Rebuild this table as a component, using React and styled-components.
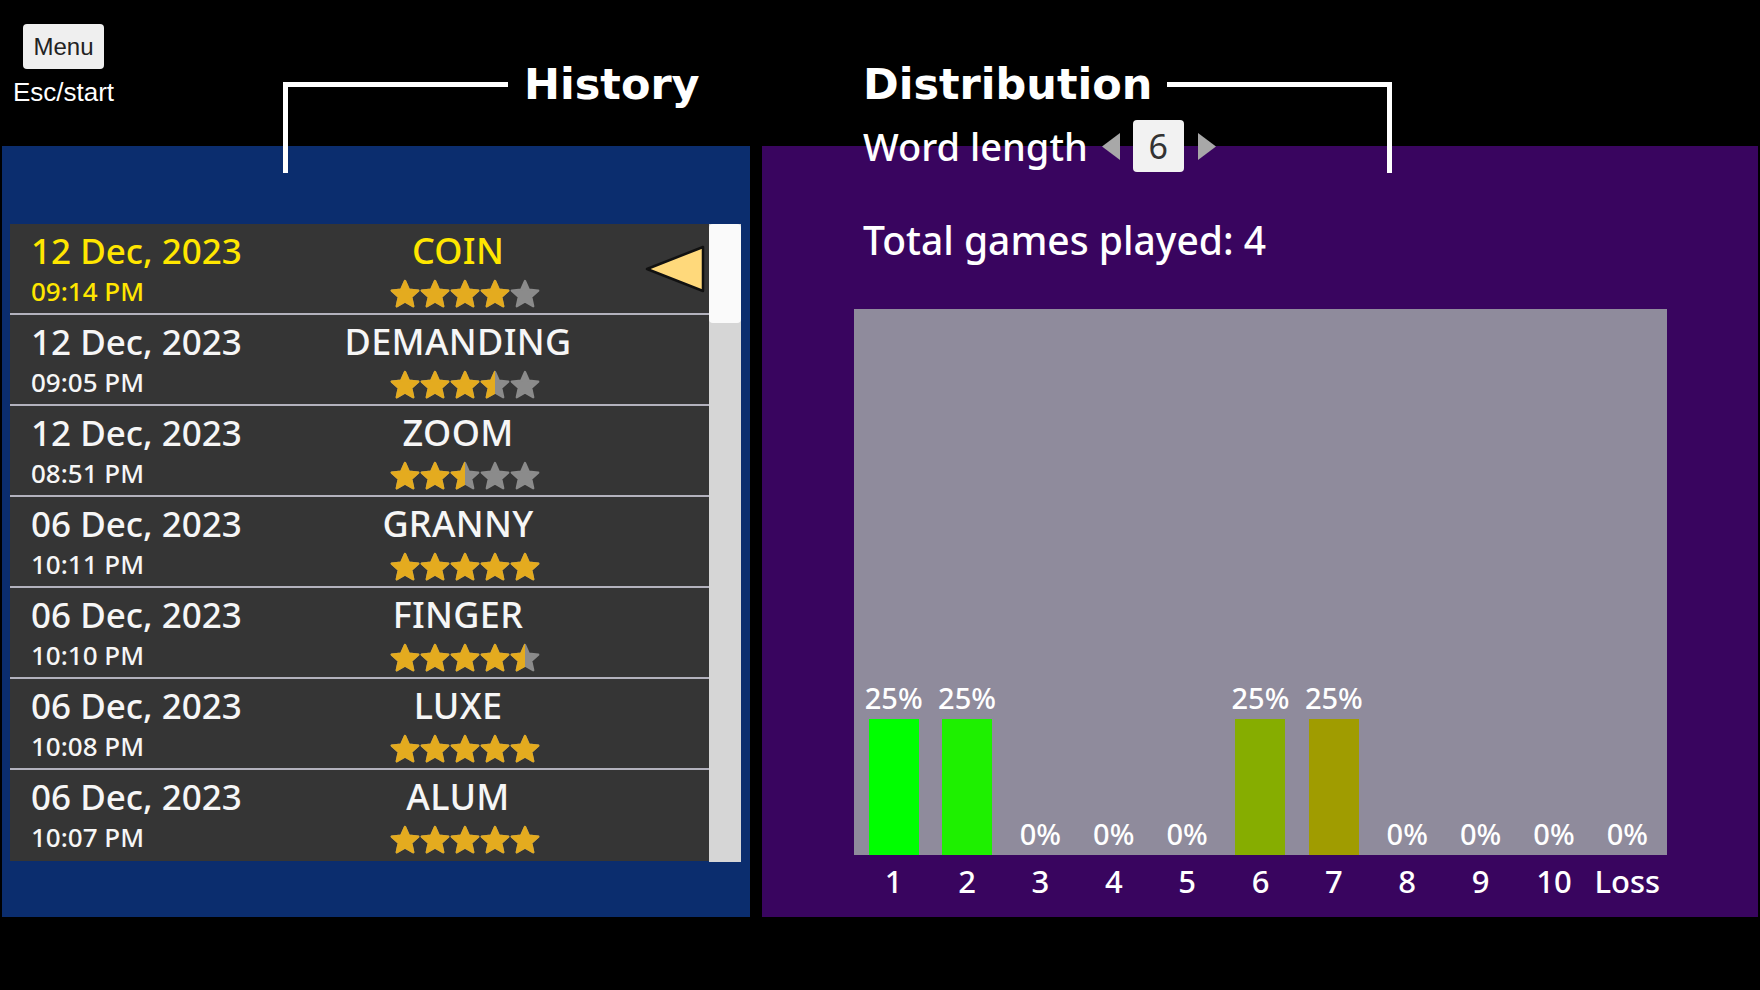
import React, { useId } from 'react'
import styled, { createGlobalStyle } from 'styled-components'

const GlobalStyle = createGlobalStyle`
  html, body {
    margin: 0;
    padding: 0;
    background: #000;
  }
  body {
    width: 1760px;
    height: 990px;
    overflow: hidden;
    font-family: "Noto Sans", "DejaVu Sans", sans-serif;
  }
  * {
    box-sizing: border-box;
  }
`

const Page = styled.div`
  width: 1760px;
  height: 990px;
  padding: 0 2px;
  display: flex;
  flex-direction: column;
  background: #000;
`

const Top = styled.header`
  height: 146px;
  display: grid;
  grid-template-columns: 748px 996px;
  column-gap: 12px;
  position: relative;
  z-index: 2;
`

const LeftHead = styled.div`
  display: flex;
  align-items: flex-start;
`

const MenuBlock = styled.div`
  width: 101px;
  margin: 24px 0 0 11px;
  display: flex;
  flex-direction: column;
  align-items: center;
`

const MenuButton = styled.button`
  width: 81px;
  height: 45px;
  border: none;
  border-radius: 4px;
  background: #efefef;
  color: #222;
  font-family: "Liberation Sans", Arial, sans-serif;
  font-size: 24px;
  padding: 0;
`

const EscLabel = styled.div`
  margin-top: 9px;
  color: #fff;
  font-family: "Liberation Sans", Arial, sans-serif;
  font-size: 26px;
  line-height: 28px;
  white-space: nowrap;
`

const HeadingRow = styled.div`
  display: flex;
  align-items: flex-start;
  height: 52px;
  margin-top: 58px;
  margin-left: ${p => p.$offset || 0}px;
`

const Bracket = styled.div`
  width: 225px;
  height: 91px;
  margin-top: 24px;
  flex-shrink: 0;
  border-top: 5px solid #fff;
  ${p => (p.$side === 'right' ? 'border-right: 5px solid #fff; margin-left: 15px;' : 'border-left: 5px solid #fff; margin-right: 16px;')}
`

const Title = styled.h1`
  margin: 0;
  color: #fff;
  font-family: "DejaVu Sans", Verdana, sans-serif;
  font-weight: bold;
  font-size: 43px;
  line-height: 52px;
  white-space: nowrap;
`

const RightHead = styled.div`
  display: flex;
  flex-direction: column;
  padding-left: 101px;
`

const WordRow = styled.div`
  display: flex;
  align-items: center;
  height: 52px;
  margin-top: 10px;
`

const WordLabel = styled.span`
  color: #fff;
  font-size: 38px;
  font-weight: 500;
  line-height: 52px;
  margin-right: 14px;
`

const ValueBox = styled.div`
  width: 51px;
  height: 52px;
  margin: 0 14px 0 13px;
  border-radius: 4px;
  background: #f2f2f2;
  color: #333;
  font-size: 34px;
  display: flex;
  align-items: center;
  justify-content: center;
`

const Panels = styled.main`
  height: 771px;
  display: grid;
  grid-template-columns: 748px 996px;
  column-gap: 12px;
`

const HistoryPanel = styled.section`
  background: #0b2d6e;
  padding: 78px 9px 0 8px;
  display: flex;
  align-items: flex-start;
`

const List = styled.div`
  width: 699px;
  display: flex;
  flex-direction: column;
`

const Row = styled.div`
  height: 91px;
  background: #353535;
  border-bottom: 2px solid #b3b2bd;
  display: grid;
  grid-template-columns: 296px 304px 1fr;
  color: ${p => (p.$active ? '#ffe600' : '#f6f6f6')};

  &:last-child {
    border-bottom: none;
  }
`

const DateCol = styled.div`
  padding: 7px 0 0 21px;
  display: flex;
  flex-direction: column;
`

const DateText = styled.div`
  font-size: 35px;
  font-weight: 500;
  line-height: 40px;
  white-space: nowrap;
`

const TimeText = styled.div`
  font-size: 26px;
  font-weight: 500;
  line-height: 30px;
  margin-top: 5px;
  white-space: nowrap;
`

const WordCol = styled.div`
  padding-top: 7px;
  display: flex;
  flex-direction: column;
  align-items: center;
`

const WordText = styled.div`
  font-size: 36px;
  font-weight: 500;
  line-height: 40px;
  letter-spacing: 0.3px;
`

const Stars = styled.div`
  display: flex;
  margin: 8px 0 0 14px;
`

const StarSvg = styled.svg`
  width: 30px;
  height: 30px;
  display: block;
`

const PointerCol = styled.div`
  display: flex;
  align-items: center;
  justify-content: flex-end;
  padding-right: 4px;
`

const Scrollbar = styled.div`
  width: 32px;
  height: 638px;
  background: #d6d6d6;
`

const Thumb = styled.div`
  height: 99px;
  border-radius: 4px;
  background: #fafafa;
`

const DistPanel = styled.section`
  background: #39055f;
  padding: 70px 0 0 92px;
  display: flex;
  flex-direction: column;
`

const TotalText = styled.div`
  margin-left: 9px;
  color: #fff;
  font-size: 39px;
  font-weight: 500;
  line-height: 48px;
`

const Chart = styled.div`
  margin-top: 45px;
  width: 813px;
  height: 546px;
  padding: 0 3px;
  background: #8f8b9c;
  display: grid;
  grid-template-columns: repeat(11, 1fr);
`

const Column = styled.div`
  display: flex;
  flex-direction: column;
  align-items: center;
  justify-content: flex-end;
`

const Pct = styled.div`
  color: #fff;
  font-size: 29px;
  font-weight: 500;
  line-height: 34px;
  margin-bottom: 4px;
`

const Bar = styled.div`
  width: 50px;
  background: ${p => p.$color};
`

const Axis = styled.div`
  width: 813px;
  padding: 0 3px;
  margin-top: 6px;
  display: grid;
  grid-template-columns: repeat(11, 1fr);
`

const AxisLabel = styled.div`
  color: #fff;
  font-size: 31px;
  font-weight: 500;
  line-height: 40px;
  text-align: center;
`

const STAR =
  'M12 1.6 L15.1 8.5 L22.6 9.3 L17 14.4 L18.6 21.8 L12 18.1 L5.4 21.8 L7 14.4 L1.4 9.3 L8.9 8.5 Z'

function Star({ fill }) {
  const id = 'c' + useId().replace(/[^a-zA-Z0-9]/g, '')
  return (
    <StarSvg viewBox="0 0 24 24">
      <defs>
        <clipPath id={id}>
          <rect x="0" y="0" width={24 * fill} height="24" />
        </clipPath>
      </defs>
      <path d={STAR} fill="#8b8b8b" stroke="#8b8b8b" strokeWidth="1.8" strokeLinejoin="round" />
      {fill > 0 && (
        <path
          d={STAR}
          fill="#e4ab1f"
          stroke="#e4ab1f"
          strokeWidth="1.8"
          strokeLinejoin="round"
          clipPath={`url(#${id})`}
        />
      )}
    </StarSvg>
  )
}

function Rating({ value }) {
  return (
    <Stars>
      {[0, 1, 2, 3, 4].map(i => (
        <Star key={i} fill={Math.max(0, Math.min(1, value - i))} />
      ))}
    </Stars>
  )
}

function Pointer() {
  return (
    <svg width="62" height="50" viewBox="0 0 62 50">
      <polygon
        points="4,25 60,3 60,47"
        fill="#ffd97b"
        stroke="#111"
        strokeWidth="2.5"
        strokeLinejoin="round"
      />
    </svg>
  )
}

function Arrow({ dir }) {
  return (
    <svg width="18" height="27" viewBox="0 0 18 27">
      <polygon points={dir === 'left' ? '18,0 18,27 0,13.5' : '0,0 0,27 18,13.5'} fill="#a8a8a8" />
    </svg>
  )
}

const history = [
  { date: '12 Dec, 2023', time: '09:14 PM', word: 'COIN', stars: 4, active: true },
  { date: '12 Dec, 2023', time: '09:05 PM', word: 'DEMANDING', stars: 3.5 },
  { date: '12 Dec, 2023', time: '08:51 PM', word: 'ZOOM', stars: 2.5 },
  { date: '06 Dec, 2023', time: '10:11 PM', word: 'GRANNY', stars: 5 },
  { date: '06 Dec, 2023', time: '10:10 PM', word: 'FINGER', stars: 4.5 },
  { date: '06 Dec, 2023', time: '10:08 PM', word: 'LUXE', stars: 5 },
  { date: '06 Dec, 2023', time: '10:07 PM', word: 'ALUM', stars: 5 },
]

const distribution = [
  { label: '1', pct: 25, color: '#00ff00' },
  { label: '2', pct: 25, color: '#1ef000' },
  { label: '3', pct: 0 },
  { label: '4', pct: 0 },
  { label: '5', pct: 0 },
  { label: '6', pct: 25, color: '#86ad00' },
  { label: '7', pct: 25, color: '#a09c00' },
  { label: '8', pct: 0 },
  { label: '9', pct: 0 },
  { label: '10', pct: 0 },
  { label: 'Loss', pct: 0 },
]

const CHART_HEIGHT = 546

export default function App() {
  return (
    <>
      <GlobalStyle />
      <Page>
        <Top>
          <LeftHead>
            <MenuBlock>
              <MenuButton>Menu</MenuButton>
              <EscLabel>Esc/start</EscLabel>
            </MenuBlock>
            <HeadingRow $offset={169}>
              <Bracket $side="left" />
              <Title>History</Title>
            </HeadingRow>
          </LeftHead>
          <RightHead>
            <HeadingRow>
              <Title>Distribution</Title>
              <Bracket $side="right" />
            </HeadingRow>
            <WordRow>
              <WordLabel>Word length</WordLabel>
              <Arrow dir="left" />
              <ValueBox>6</ValueBox>
              <Arrow dir="right" />
            </WordRow>
          </RightHead>
        </Top>
        <Panels>
          <HistoryPanel>
            <List>
              {history.map((h, i) => (
                <Row key={i} $active={h.active}>
                  <DateCol>
                    <DateText>{h.date}</DateText>
                    <TimeText>{h.time}</TimeText>
                  </DateCol>
                  <WordCol>
                    <WordText>{h.word}</WordText>
                    <Rating value={h.stars} />
                  </WordCol>
                  <PointerCol>{h.active && <Pointer />}</PointerCol>
                </Row>
              ))}
            </List>
            <Scrollbar>
              <Thumb />
            </Scrollbar>
          </HistoryPanel>
          <DistPanel>
            <TotalText>Total games played: 4</TotalText>
            <Chart>
              {distribution.map(d => (
                <Column key={d.label}>
                  <Pct>{d.pct}%</Pct>
                  <Bar $color={d.color || 'transparent'} style={{ height: (CHART_HEIGHT * d.pct) / 100 }} />
                </Column>
              ))}
            </Chart>
            <Axis>
              {distribution.map(d => (
                <AxisLabel key={d.label}>{d.label}</AxisLabel>
              ))}
            </Axis>
          </DistPanel>
        </Panels>
      </Page>
    </>
  )
}
